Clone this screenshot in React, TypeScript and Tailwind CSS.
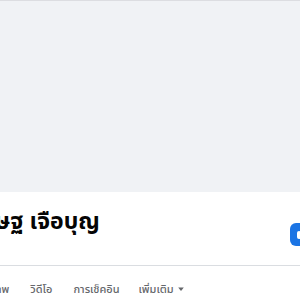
export default function App() {
  return (
    <div className="w-[300px] h-[300px] overflow-hidden bg-white" style={{ fontFamily: '"Noto Sans", "Noto Sans Thai", "DejaVu Sans", sans-serif' }}>
      <div className="h-[192px] bg-[#f0f2f5] border-t border-[#dcdde1]" />
      <div className="flex items-start justify-between h-[73px]">
        <div className="ml-[-17px] mt-[12px] text-[23px] font-bold text-[#050505] leading-[32px] whitespace-nowrap">วิษฐ เจือบุญ</div>
        <div className="mt-[31px] mr-[-20px] w-[30px] h-[23px] rounded-[6px] bg-[#1b74e4] flex items-center pl-[7px]">
          <div className="w-[4px] h-[8px] bg-white rounded-sm" />
        </div>
      </div>
      <div className="border-t border-[#dadde1] flex gap-[21px] pt-[15px] text-[11px] font-medium text-[#65676b] whitespace-nowrap ml-[-22px]">
        <span>รูปภาพ</span>
        <span>วิดีโอ</span>
        <span>การเช็คอิน</span>
        <span className="flex items-center gap-[3px] -ml-[2px]">เพิ่มเติม<svg width="8" height="8" viewBox="0 0 10 10"><path d="M1.5 3h7L5 7.5z" fill="#65676b" /></svg></span>
      </div>
    </div>
  );
}
